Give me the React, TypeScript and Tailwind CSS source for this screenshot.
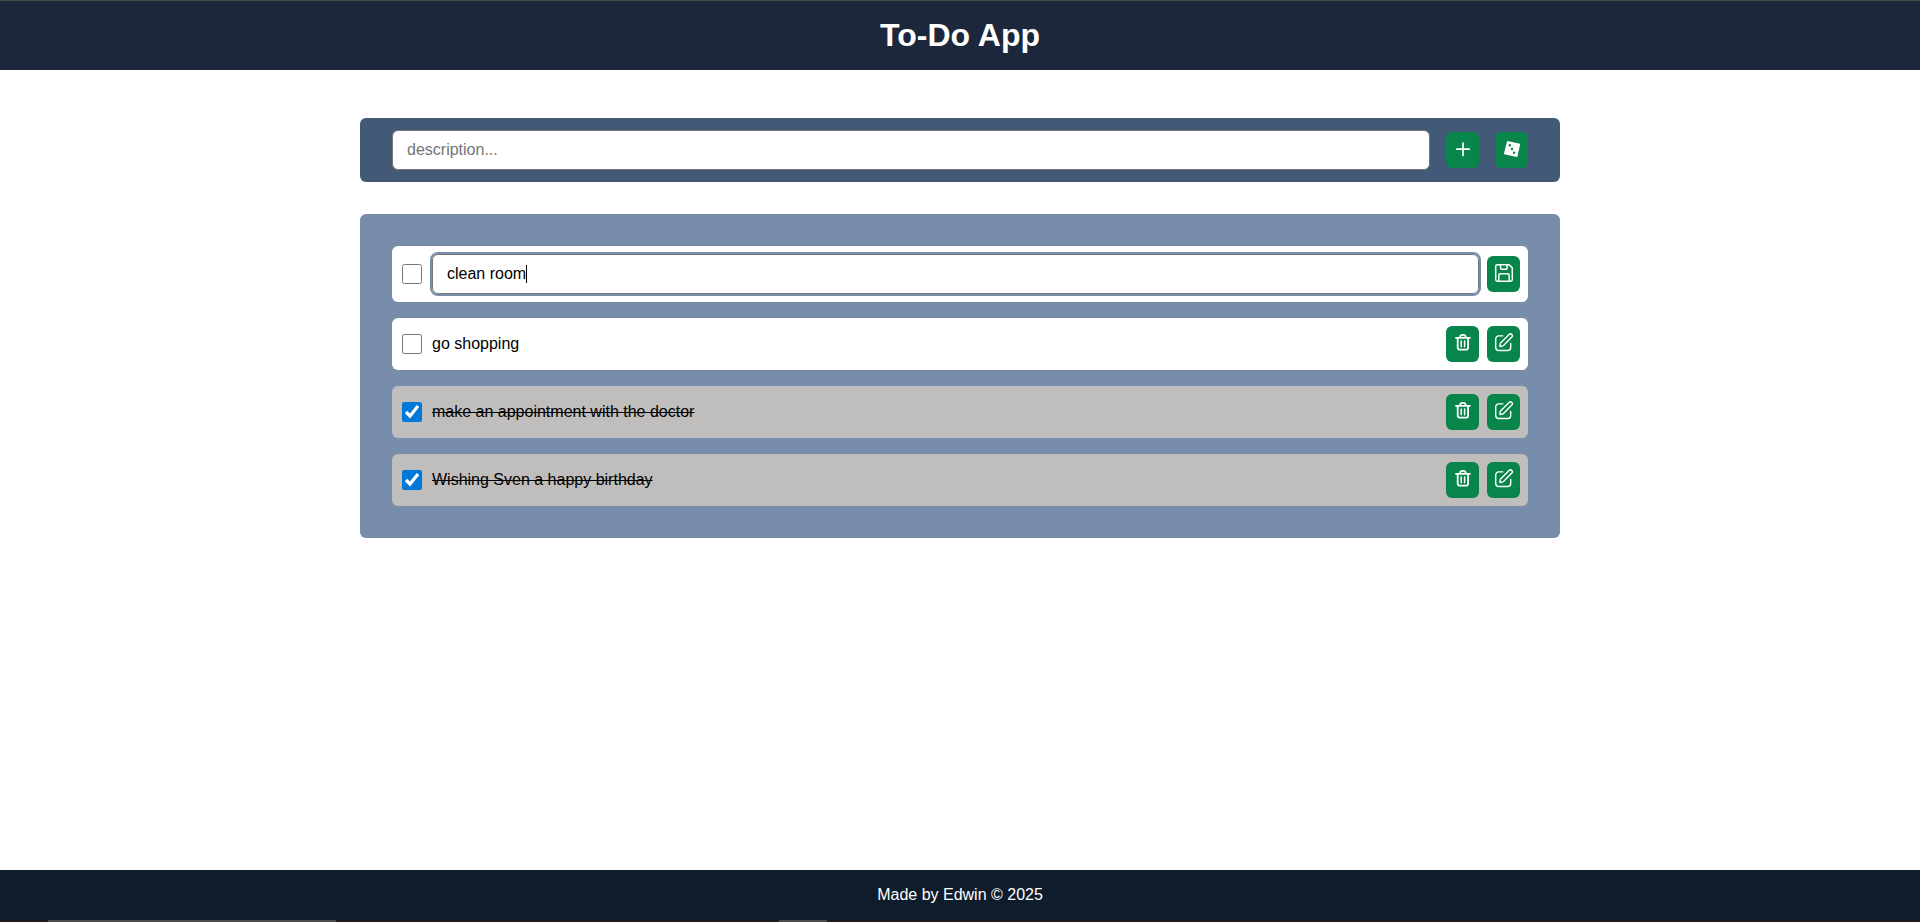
import { useState, type ReactNode } from "react";

type Todo = { id: number; text: string; done: boolean; editing?: boolean };

const initial: Todo[] = [
  { id: 1, text: "clean room", done: false, editing: true },
  { id: 2, text: "go shopping", done: false },
  { id: 3, text: "make an appointment with the doctor", done: true },
  { id: 4, text: "Wishing Sven a happy birthday", done: true },
];

function PlusIcon() {
  return (
    <svg viewBox="0.5 0 20 20" className="size-5" fill="none" stroke="currentColor" strokeWidth="1.7" strokeLinecap="round">
      <path d="M10.500 4v12.500M4.200 10.200h12.500" />
    </svg>
  );
}

function DiceIcon() {
  return (
    <svg viewBox="0.5 0 20 20" className="size-5">
      <path fill="currentColor" d="M6.100 2 18.200 4.800a.5.5 0 0 1 .4.6l-2.700 12.300a.5.5 0 0 1-.6.4L2.900 15.200a.5.5 0 0 1-.4-.6L5.500 2.400a.5.5 0 0 1 .6-.4Z" />
      <g className="fill-[#08854a]">
        <circle cx="8.300" cy="6.300" r="1.200" />
        <circle cx="10.500" cy="10" r="1.200" />
        <circle cx="12.600" cy="13.700" r="1.200" />
      </g>
    </svg>
  );
}

function SaveIcon() {
  return (
    <svg viewBox="0.5 0 20 20" className="size-5" fill="none" stroke="currentColor" strokeWidth="1.5" strokeLinecap="round" strokeLinejoin="round">
      <path d="M3.900 1.700h11.700l3.200 3.200v11.700a1.700 1.700 0 0 1-1.700 1.700H3.900a1.700 1.700 0 0 1-1.700-1.700V3.400a1.700 1.700 0 0 1 1.700-1.700Z" />
      <path d="M7 1.700v3.400a1.200 1.200 0 0 0 1.200 1.200h4.200a1.200 1.200 0 0 0 1.200-1.200V1.700M5.300 18.300v-5.800a1.700 1.700 0 0 1 1.700-1.700h7a1.700 1.700 0 0 1 1.700 1.700v5.800" />
    </svg>
  );
}

function TrashIcon() {
  return (
    <svg viewBox="0.5 0 20 20" className="size-5" fill="none" stroke="currentColor" strokeWidth="1.800" strokeLinecap="round" strokeLinejoin="round">
      <path d="M3.400 4.800h14M5.200 5v9.500a2.200 2.200 0 0 0 2.200 2.200h6a2.200 2.200 0 0 0 2.200-2.200V5M7.600 4.500c0-1.900.8-2.700 2.200-2.700h1.200c1.400 0 2.200.8 2.200 2.700" />
      <path strokeWidth="1.500" d="M8.700 7.900v5.900M12.100 7.900v5.900" />
    </svg>
  );
}

function EditIcon() {
  return (
    <svg viewBox="0.5 0 20 20" className="size-5" fill="none" stroke="currentColor" strokeWidth="1.400" strokeLinecap="round" strokeLinejoin="round">
      <path d="M9.300 2.900H5.200a3 3 0 0 0-3 3v8.600a3 3 0 0 0 3 3h9a3 3 0 0 0 3-3V10.400" />
      <path d="m6.400 13.500.3-2.600a2 2 0 0 1 .6-1.200l8.300-8.300a1.900 1.900 0 0 1 2.700 2.700L10 12.500a2 2 0 0 1-1.200.6Z" />
    </svg>
  );
}

function IconButton({ label, onClick, submit, children }: { label: string; onClick?: () => void; submit?: boolean; children: ReactNode }) {
  return (
    <button
      type={submit ? "submit" : "button"}
      aria-label={label}
      onClick={onClick}
      className="flex h-9 w-[33px] shrink-0 items-center justify-center rounded-md bg-[#08854a] pb-0.5 text-white"
    >
      {children}
    </button>
  );
}

function EditField({ value, onChange }: { value: string; onChange: (text: string) => void }) {
  const [touched, setTouched] = useState(false);
  const [showCaret] = useState(value === initial[0].text);
  const steady = showCaret && !touched;
  return (
    <div className="relative flex min-w-0 grow items-center">
      <input
        type="text"
        aria-label="Edit description"
        autoFocus
        value={value}
        onKeyDown={() => setTouched(true)}
        onMouseDown={() => setTouched(true)}
        onChange={(e) => onChange(e.target.value)}
        className={`h-10 min-w-0 grow rounded-md border border-[#767676] bg-white px-3.5 outline-2 outline-[#788dab] ${steady ? "caret-transparent" : ""}`}
      />
      {/* steady caret shown until the first interaction */}
      {steady && <span className="pointer-events-none absolute left-[94px] h-[18px] w-px bg-black" />}
    </div>
  );
}

export default function App() {
  const [todos, setTodos] = useState(initial);
  const [draft, setDraft] = useState("");

  const update = (id: number, change: Partial<Todo>) =>
    setTodos((list) => list.map((t) => (t.id === id ? { ...t, ...change } : t)));
  const add = (text: string) => {
    if (text.trim()) setTodos((list) => [{ id: Date.now(), text, done: false }, ...list]);
  };

  return (
    <div className="flex min-h-screen flex-col bg-white font-['Liberation_Sans',Arial,sans-serif] text-base text-black">
      <header className="border-t border-[#474747] bg-[#1c273b] py-4 text-center">
        <h1 className="text-[32px] leading-[37px] font-bold text-white">To-Do App</h1>
      </header>

      <main className="mx-auto flex w-full max-w-[1200px] grow flex-col gap-8 pt-12">
        <form
          className="flex items-center gap-4 rounded-md bg-[#425a78] px-8 py-3"
          onSubmit={(e) => {
            e.preventDefault();
            add(draft);
            setDraft("");
          }}
        >
          <input
            type="text"
            aria-label="Description"
            placeholder="description..."
            value={draft}
            onChange={(e) => setDraft(e.target.value)}
            className="h-10 min-w-0 grow rounded-md border border-[#767676] bg-white px-3.5 outline-none placeholder:text-[#757575]"
          />
          <IconButton label="Add" submit>
            <PlusIcon />
          </IconButton>
          <IconButton label="Add random" onClick={() => add("water the plants")}>
            <DiceIcon />
          </IconButton>
        </form>

        <ul className="flex flex-col gap-4 rounded-md bg-[#788dab] p-8">
          {todos.map((t) => (
            <li key={t.id} className={`flex items-center gap-2 rounded-md p-2 ${t.done ? "bg-[#c0bebc]" : "bg-white"}`}>
              <input
                id={`todo-${t.id}`}
                type="checkbox"
                aria-label={t.text}
                checked={t.done}
                onChange={() => update(t.id, { done: !t.done })}
                className="mx-0.5 size-5 shrink-0 accent-[#0078d7]"
              />
              {t.editing ? (
                <EditField value={t.text} onChange={(text) => update(t.id, { text })} />
              ) : (
                <label htmlFor={`todo-${t.id}`} className={`grow ${t.done ? "line-through" : ""}`}>
                  {t.text}
                </label>
              )}
              {t.editing ? (
                <IconButton label="Save" onClick={() => update(t.id, { editing: false })}>
                  <SaveIcon />
                </IconButton>
              ) : (
                <>
                  <IconButton label="Delete" onClick={() => setTodos((list) => list.filter((x) => x.id !== t.id))}>
                    <TrashIcon />
                  </IconButton>
                  <IconButton label="Edit" onClick={() => update(t.id, { editing: true })}>
                    <EditIcon />
                  </IconButton>
                </>
              )}
            </li>
          ))}
        </ul>
      </main>

      <footer className="bg-[#0f1c2b] text-center text-white">
        <p className="py-[13px]">Made by Edwin © 2025</p>
        <div className="flex h-0.5 bg-[#221a20]">
          <div className="ml-12 w-72 bg-[#4b4b4b]" />
          <div className="ml-[443px] w-12 bg-[#4b4b4b]" />
        </div>
      </footer>
    </div>
  );
}
